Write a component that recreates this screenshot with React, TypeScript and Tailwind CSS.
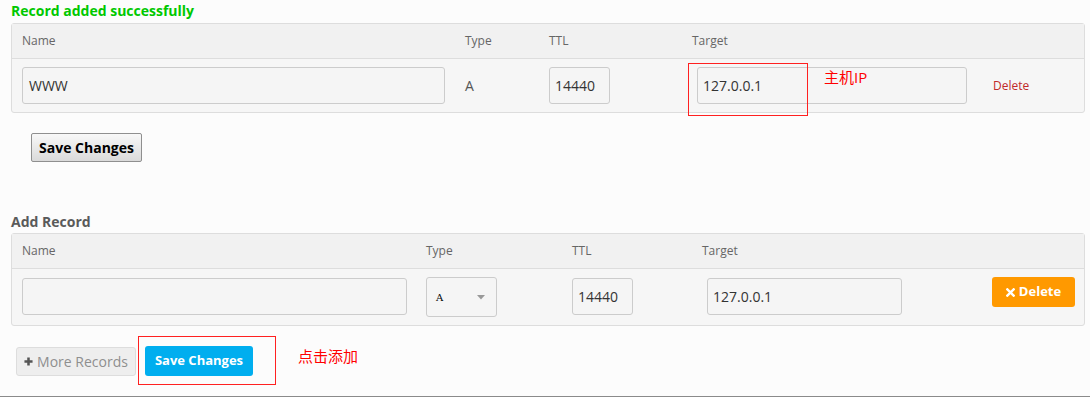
import React from "react";

const font = { fontFamily: '"Open Sans", "Noto Sans CJK SC", sans-serif' };

function TimesIcon() {
  return (
    <svg width="9" height="9" viewBox="0 0 10 10" className="inline-block">
      <path d="M1.5 1.5 L8.5 8.5 M8.5 1.5 L1.5 8.5" stroke="white" strokeWidth="2.6" strokeLinecap="square" />
    </svg>
  );
}

function PlusIcon() {
  return (
    <svg width="9" height="9" viewBox="0 0 10 10" className="inline-block">
      <path d="M5 0.5 V9.5 M0.5 5 H9.5" stroke="#555" strokeWidth="2.8" />
    </svg>
  );
}

export default function App() {
  return (
    <div
      className="relative w-[1090px] h-[397px] bg-[#fcfcfc] border-b border-[#8a8a8a] box-border overflow-hidden"
      style={font}
    >
      {/* success message */}
      <div className="h-[23px] pt-[1px] pl-[11px] text-[14px] leading-[20px] font-bold text-[#00c800]">
        Record added successfully
      </div>

      {/* existing record panel */}
      <div className="ml-[11px] w-[1074px] border border-[#ddd] rounded-[3px] bg-[#f6f6f6]">
        <div className="h-[35px] bg-[#f1f1f1] border-b border-[#ddd] pl-[10px] grid grid-cols-[443px_84px_143px_301px_1fr] items-center text-[12px] text-[#666]">
          <div>Name</div>
          <div>Type</div>
          <div>TTL</div>
          <div>Target</div>
          <div />
        </div>
        <div className="h-[53px] pl-[10px] grid grid-cols-[443px_84px_143px_301px_1fr] items-center text-[14px] text-[#333]">
          <div className="w-[423px] h-[37px] border border-[#ccc] rounded-[3px] bg-[#f5f5f5] px-[6px] flex items-center">WWW</div>
          <div className="text-[#555]">A</div>
          <div className="w-[61px] h-[37px] border border-[#ccc] rounded-[3px] bg-[#f5f5f5] px-[5px] flex items-center">14440</div>
          <div className="ml-[5px] w-[270px] h-[37px] border border-[#ccc] rounded-[3px] bg-[#f5f5f5] px-[5px] flex items-center">127.0.0.1</div>
          <div className="text-[12px] text-[#c12a2a]">Delete</div>
        </div>
      </div>

      {/* save changes (old style) */}
      <button className="mt-[20px] ml-[31px] w-[111px] h-[29px] border border-[#8f8f8f] rounded-[2px] bg-gradient-to-b from-[#f8f8f8] to-[#dadada] text-[14px] font-bold text-black flex items-center justify-center">
        Save Changes
      </button>

      {/* add record */}
      <div className="mt-[50px] h-[21px] pl-[11px] text-[14px] leading-[20px] font-bold text-[#5a5a5a]">Add Record</div>
      <div className="ml-[11px] w-[1074px] border border-[#ddd] rounded-[3px] bg-[#f6f6f6]">
        <div className="h-[35px] bg-[#f1f1f1] border-b border-[#ddd] pl-[10px] grid grid-cols-[404px_146px_130px_290px_1fr] items-center text-[12px] text-[#666]">
          <div>Name</div>
          <div>Type</div>
          <div>TTL</div>
          <div>Target</div>
          <div />
        </div>
        <div className="h-[56px] pl-[10px] pt-[8px] grid grid-cols-[404px_146px_130px_290px_1fr] items-start text-[14px] text-[#333]">
          <div className="mt-[1px] w-[385px] h-[37px] border border-[#ccc] rounded-[3px] bg-[#f5f5f5]" />
          <div className="w-[71px] h-[40px] border border-[#ccc] rounded-[3px] bg-[#f5f5f5] pl-[9px] pr-[11px] flex items-center justify-between">
            <span className="text-[10px] text-black" style={{ fontFamily: '"DejaVu Serif", serif' }}>A</span>
            <svg width="8" height="5" viewBox="0 0 8 5"><path d="M0 0 H8 L4 4.5 Z" fill="#999" /></svg>
          </div>
          <div className="mt-[1px] w-[61px] h-[37px] border border-[#ccc] rounded-[3px] bg-[#f5f5f5] px-[5px] flex items-center">14440</div>
          <div className="mt-[1px] ml-[5px] w-[195px] h-[37px] border border-[#ccc] rounded-[3px] bg-[#f5f5f5] px-[5px] flex items-center">127.0.0.1</div>
          <button className="w-[83px] h-[30px] rounded-[3px] bg-[#ff9900] text-white text-[13px] font-bold flex items-center justify-center gap-[4px]">
            <TimesIcon />
            Delete
          </button>
        </div>
      </div>

      {/* bottom buttons */}
      <div className="mt-[20px] ml-[16px] flex items-center gap-[9px]">
        <button className="w-[120px] h-[29px] border border-[#ddd] rounded-[3px] bg-[#eeeeee] text-[14px] text-[#8f8f8f] flex items-center justify-center gap-[4px]">
          <PlusIcon />
          More Records
        </button>
        <button className="w-[108px] h-[30px] rounded-[3px] bg-[#00aeef] text-white text-[13px] font-bold flex items-center justify-center">
          Save Changes
        </button>
      </div>

      {/* annotations */}
      <div className="absolute left-[688px] top-[63px] w-[120px] h-[53px] border-t border-r border-b border-l border-t-[#ff2020] border-r-[#ff2020] border-b-[#ff2020] border-l-[#ff2020]" />
      <div className="absolute left-[824px] top-[67px] text-[15px] leading-[20px] text-[#ff0000]">主机IP</div>
      <div className="absolute left-[138px] top-[336px] w-[138px] h-[49px] border border-[#ff2020]" />
      <div className="absolute left-[298px] top-[346px] text-[15px] leading-[20px] text-[#ff0000]">点击添加</div>
    </div>
  );
}
